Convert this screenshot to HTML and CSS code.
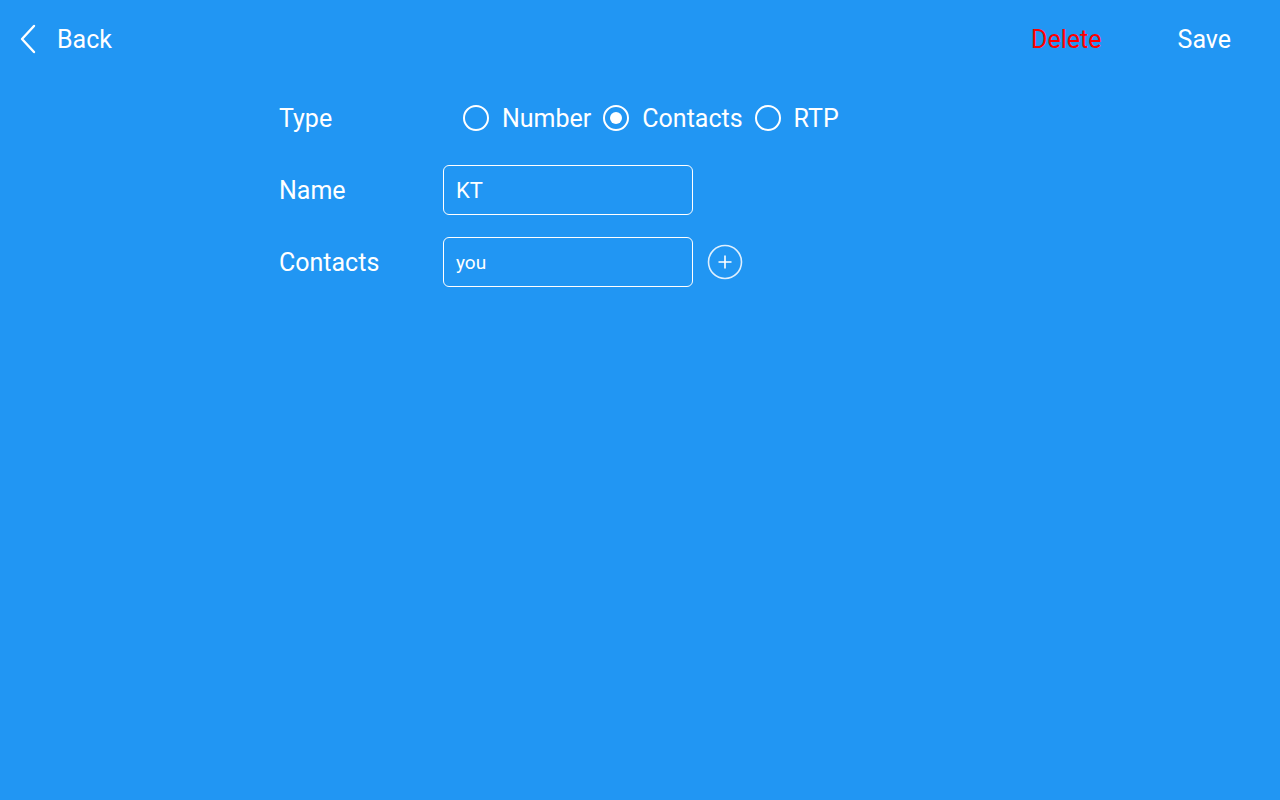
FILE: index.html
```html
<!DOCTYPE html>
<html lang="en">
  <head>
    <meta charset="UTF-8" />
    <meta name="viewport" content="width=device-width, initial-scale=1.0" />
    <title>Edit</title>
    <link rel="stylesheet" href="styles.css">
  </head>
  <body>
    <div class="header flex">
      <a class="back flex" href="#">
        <svg width="20" height="30" viewBox="0 0 20 30">
          <path d="M16 2 L4 15 L16 28" fill="none" stroke="#fff" stroke-width="2.4" stroke-linecap="round" stroke-linejoin="round" />
        </svg>
        <span>Back</span>
      </a>
      <div class="actions flex">
        <a class="delete" href="#">Delete</a>
        <a class="save" href="#">Save</a>
      </div>
    </div>

    <form class="form">
      <div class="row flex">
        <label class="label">Type</label>
        <div class="radios flex">
          <label class="radio flex"><span class="dot"></span>Number</label>
          <label class="radio flex"><span class="dot checked"></span>Contacts</label>
          <label class="radio flex"><span class="dot"></span>RTP</label>
        </div>
      </div>
      <div class="row flex">
        <label class="label">Name</label>
        <div class="field">KT</div>
      </div>
      <div class="row flex">
        <label class="label">Contacts</label>
        <div class="field small">you</div>
        <button type="button" class="add">
          <svg width="36" height="36" viewBox="0 0 36 36">
            <circle cx="18" cy="18" r="16.5" fill="none" stroke="#fff" stroke-width="1.6" stroke-opacity="0.85" />
            <path d="M18 11.5 V24.5 M11.5 18 H24.5" stroke="#fff" stroke-width="1.6" />
          </svg>
        </button>
      </div>
    </form>
  </body>
</html>
```

FILE: styles.css
```css
* {
  margin: 0;
  padding: 0;
  box-sizing: border-box;
  font-family: Roboto, "Liberation Sans", sans-serif;
}
html,
body {
  background: #2196f3;
  color: #fff;
  min-height: 100vh;
}
.flex {
  display: flex;
  align-items: center;
}
a {
  text-decoration: none;
  color: #fff;
}

.header {
  justify-content: space-between;
  height: 78px;
  padding: 0 49px 0 18px;
}

.back {
  font-size: 25px;
  gap: 19px;
}

.actions {
  gap: 76px;
  font-size: 25px;
}

.actions .delete {
  color: #ff0000;
}

.form {
  padding: 15px 0 0 279px;
  display: flex;
  flex-direction: column;
  gap: 22px;
}

.row {
  height: 50px;
}

.label {
  width: 164px;
  font-size: 25px;
}

.radios {
  margin-left: 20px;
  gap: 12px;
  font-size: 25px;
}

.radio {
  gap: 13px;
}

.dot {
  width: 26px;
  height: 26px;
  border: 2px solid #fff;
  border-radius: 50%;
  display: flex;
  align-items: center;
  justify-content: center;
}

.dot.checked::after {
  content: "";
  width: 12px;
  height: 12px;
  border-radius: 50%;
  background: #fff;
}

.field {
  width: 250px;
  height: 50px;
  border: 1px solid #fff;
  border-radius: 6px;
  padding: 0 12px;
  font-size: 22px;
  display: flex;
  align-items: center;
}

.field.small {
  font-size: 19px;
}

.add {
  margin-left: 14px;
  background: none;
  border: none;
  display: flex;
}
```
